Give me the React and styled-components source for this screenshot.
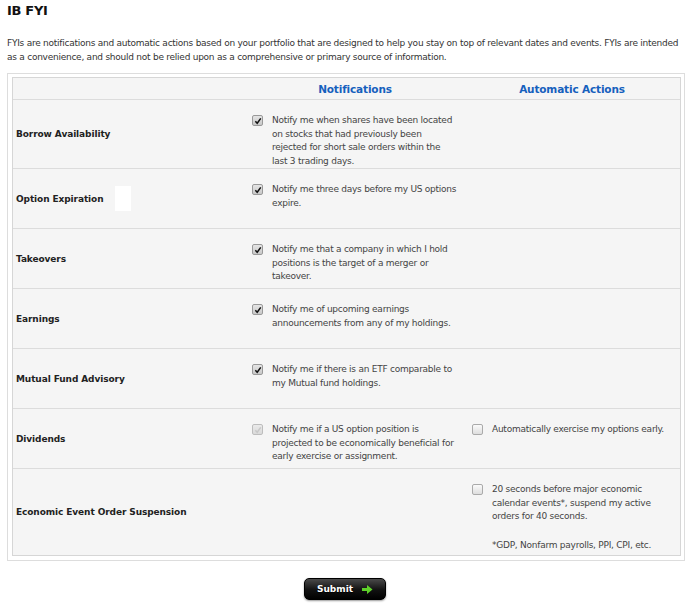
import styled, { createGlobalStyle } from 'styled-components';

const GlobalStyle = createGlobalStyle`
  body {
    margin: 0;
    background: #fff;
    font-family: 'DejaVu Sans', sans-serif;
    color: #333;
  }
`;

const rows = [
  {
    label: 'Borrow Availability',
    note: 'Notify me when shares have been located on stocks that had previously been rejected for short sale orders within the last 3 trading days.',
  },
  { label: 'Option Expiration', note: 'Notify me three days before my US options expire.', blank: true },
  { label: 'Takeovers', note: 'Notify me that a company in which I hold positions is the target of a merger or takeover.' },
  { label: 'Earnings', note: 'Notify me of upcoming earnings announcements from any of my holdings.' },
  { label: 'Mutual Fund Advisory', note: 'Notify me if there is an ETF comparable to my Mutual fund holdings.' },
  {
    label: 'Dividends',
    note: 'Notify me if a US option position is projected to be economically beneficial for early exercise or assignment.',
    disabled: true,
    action: 'Automatically exercise my options early.',
  },
  {
    label: 'Economic Event Order Suspension',
    noNote: true,
    action: '20 seconds before major economic calendar events*, suspend my active orders for 40 seconds.',
    footnote: '*GDP, Nonfarm payrolls, PPI, CPI, etc.',
    tall: true,
  },
];

const Check = ({ checked, disabled }) => (
  <Box $checked={checked} $disabled={disabled}>
    {checked && (
      <svg width='8' height='8' viewBox='0 0 9 9'>
        <path d='M1.5 4.8 L3.6 7 L7.6 1.6' fill='none' stroke={disabled ? '#aaa' : '#111'} strokeWidth='1.7' />
      </svg>
    )}
  </Box>
);

const App = () => {
  return (
    <Page>
      <GlobalStyle />
      <Title>IB FYI</Title>
      <Intro>
        FYIs are notifications and automatic actions based on your portfolio that are designed to help you stay on top of
        relevant dates and events. FYIs are intended as a convenience, and should not be relied upon as a comprehensive or
        primary source of information.
      </Intro>
      <Frame>
        <Table>
          <HeadRow>
            <span />
            <HeadCell>Notifications</HeadCell>
            <HeadCell>Automatic Actions</HeadCell>
          </HeadRow>
          {rows.map((r) => (
            <Row key={r.label} $tall={r.tall}>
              <Label>
                {r.label}
                {r.blank && <Blank />}
              </Label>
              <Cell>
                {!r.noNote && (
                  <>
                    <Check checked disabled={r.disabled} />
                    <Text $muted={r.disabled}>{r.note}</Text>
                  </>
                )}
              </Cell>
              <Cell $action>
                {r.action && (
                  <>
                    <Check />
                    <Text $wide>
                      {r.action}
                      {r.footnote && <Foot>{r.footnote}</Foot>}
                    </Text>
                  </>
                )}
              </Cell>
            </Row>
          ))}
        </Table>
      </Frame>
      <Actions>
        <SubmitButton>
          Submit
          <svg width='11' height='9' viewBox='0 0 11 9'>
            <path d='M0 3 H5 V0 L10.5 4.5 L5 9 V6 H0 Z' fill='#5fd12a' />
          </svg>
        </SubmitButton>
      </Actions>
    </Page>
  );
};

const Page = styled.div`
  width: 700px;
  height: 605px;
  padding: 4px 7px 0;
  box-sizing: border-box;
`;

const Title = styled.h1`
  margin: 0;
  font-size: 13px;
  font-weight: bold;
  color: #111;
  letter-spacing: -0.3px;
  line-height: 14px;
`;

const Intro = styled.p`
  margin: 18px 0 0;
  font-size: 9px;
  line-height: 14px;
  color: #333;
  width: 680px;
  letter-spacing: -0.25px;
`;

const Frame = styled.div`
  margin-top: 9px;
  width: 678px;
  border: 1px solid #ddd;
  padding: 3px 3px 4px 4px;
  box-sizing: border-box;
  background: #fff;
`;

const Table = styled.div`
  border: 1px solid #d6d6d6;
  background: #f5f5f5;
`;

const HeadRow = styled.div`
  display: grid;
  grid-template-columns: 233px 218px 1fr;
  height: 21px;
  align-items: center;
  border-bottom: 1px solid #dcdcdc;
`;

const HeadCell = styled.div`
  text-align: center;
  font-size: 10.5px;
  font-weight: bold;
  color: #1560bd;
  letter-spacing: -0.15px;
`;

const Row = styled.div`
  display: grid;
  grid-template-columns: 233px 218px 1fr;
  min-height: ${(p) => (p.$tall ? '86px' : '59px')};
  border-bottom: 1px solid #dcdcdc;
  &:last-child {
    border-bottom: none;
  }
`;

const Label = styled.div`
  display: flex;
  align-items: center;
  padding-left: 3px;
  font-size: 9px;
  font-weight: bold;
  color: #222;
  letter-spacing: -0.1px;
`;

const Blank = styled.span`
  display: inline-block;
  width: 16px;
  height: 25px;
  background: #fff;
  margin-left: 12px;
`;

const Cell = styled.div`
  display: flex;
  align-items: flex-start;
  gap: 9px;
  padding: 14px 0 0 ${(p) => (p.$action ? '8px' : '6px')};
`;

const Box = styled.span`
  flex: none;
  width: 9px;
  height: 9px;
  margin-top: 1px;
  border: 1px solid ${(p) => (p.$checked ? '#999' : '#aaa')};
  border-radius: 2px;
  background: ${(p) => (p.$checked ? 'linear-gradient(#e4e4e4, #c8c8c8)' : 'linear-gradient(#fafafa, #dedede)')};
  opacity: ${(p) => (p.$disabled ? 0.6 : 1)};
  display: flex;
  align-items: center;
  justify-content: center;
`;

const Text = styled.div`
  width: ${(p) => (p.$wide ? '178px' : '186px')};
  font-size: 9px;
  line-height: 13.5px;
  color: ${(p) => (p.$muted ? '#444' : '#444')};
  letter-spacing: -0.25px;
`;

const Foot = styled.div`
  margin-top: 15px;
`;

const Actions = styled.div`
  display: flex;
  justify-content: center;
  padding-top: 17px;
  padding-right: 10px;
`;

const SubmitButton = styled.button`
  display: flex;
  align-items: center;
  justify-content: center;
  gap: 9px;
  width: 82px;
  height: 22px;
  border: 1px solid #000;
  border-radius: 5px;
  background: linear-gradient(#4a4a4a, #111 55%, #000);
  box-shadow: 0 1px 2px rgba(0, 0, 0, 0.4);
  color: #fff;
  font-family: 'DejaVu Sans', sans-serif;
  font-size: 9px;
  font-weight: bold;
  text-shadow: 0 1px 1px #000;
  cursor: pointer;
`;

export default App;
